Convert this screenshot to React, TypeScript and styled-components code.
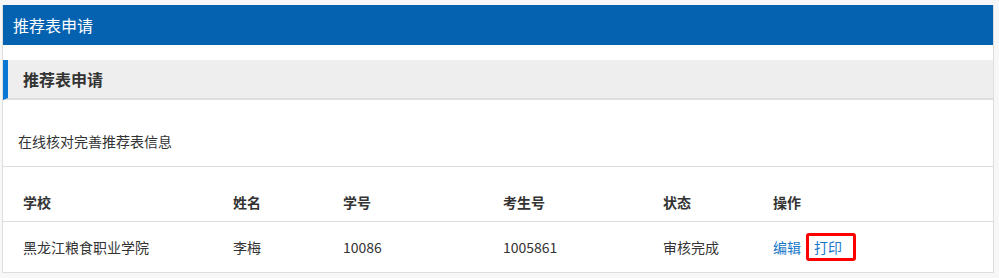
import React from "react";
import styled, { createGlobalStyle } from "styled-components";

const Global = createGlobalStyle`
  html, body { margin: 0; padding: 0; background: #f7f7f7; }
  body { font-family: "Microsoft YaHei", "Noto Sans CJK SC", "Noto Sans", sans-serif; color: #333; }
`;

const Page = styled.div`
  padding: 5px 5px 0 2px;
`;

const Panel = styled.div`
  background: #fff;
  border: 1px solid #dedede;
  border-top: none;
`;

const TopBar = styled.div`
  height: 40px;
  background: #0462b1;
  color: #fff;
  font-size: 16px;
  line-height: 40px;
  padding-left: 10px;
`;

const SectionHead = styled.div`
  margin-top: 15px;
  height: 38px;
  background: #eeeeee;
  border-left: 5px solid #0b77d5;
  border-bottom: 2px solid #dddddd;
  display: flex;
  align-items: center;
  padding-left: 15px;
  font-size: 16px;
  font-weight: bold;
  color: #333;
`;

const Desc = styled.div`
  padding: 31px 15px 15px;
  font-size: 14px;
  line-height: 20px;
  border-bottom: 1px solid #dddddd;
`;

const Table = styled.div`
  display: grid;
  grid-template-columns: 210px 110px 160px 160px 110px 1fr;
`;

const Cell = styled.div<{ $head?: boolean }>`
  padding-left: 20px;
  font-size: 14px;
  display: flex;
  align-items: ${(p) => (p.$head ? "flex-end" : "center")};
  font-weight: ${(p) => (p.$head ? "bold" : "normal")};
  height: ${(p) => (p.$head ? "55px" : "50px")};
  box-sizing: border-box;
  padding-bottom: ${(p) => (p.$head ? "9px" : "0")};
  border-bottom: ${(p) => (p.$head ? "1px solid #dddddd" : "none")};
  line-height: 20px;
`;

const Actions = styled.div`
  display: flex;
  align-items: center;
  gap: 5px;
`;

const Link = styled.a<{ $boxed?: boolean }>`
  color: #1878c8;
  text-decoration: none;
  font-size: 14px;
  line-height: 20px;
  ${(p) =>
    p.$boxed
      ? `border: 3px solid #ff0000; border-radius: 3px; padding: 1px 11px 1px 5px;`
      : `padding: 4px 0;`}
`;

const heads = ["学校", "姓名", "学号", "考生号", "状态", "操作"];

export default function App() {
  return (
    <>
      <Global />
      <Page>
        <Panel>
          <TopBar>推荐表申请</TopBar>
          <SectionHead>推荐表申请</SectionHead>
          <Desc>在线核对完善推荐表信息</Desc>
          <Table>
            {heads.map((h) => (
              <Cell key={h} $head>
                {h}
              </Cell>
            ))}
            <Cell>黑龙江粮食职业学院</Cell>
            <Cell>李梅</Cell>
            <Cell>10086</Cell>
            <Cell>1005861</Cell>
            <Cell>审核完成</Cell>
            <Cell>
              <Actions>
                <Link href="#">编辑</Link>
                <Link href="#" $boxed>
                  打印
                </Link>
              </Actions>
            </Cell>
          </Table>
        </Panel>
      </Page>
    </>
  );
}
